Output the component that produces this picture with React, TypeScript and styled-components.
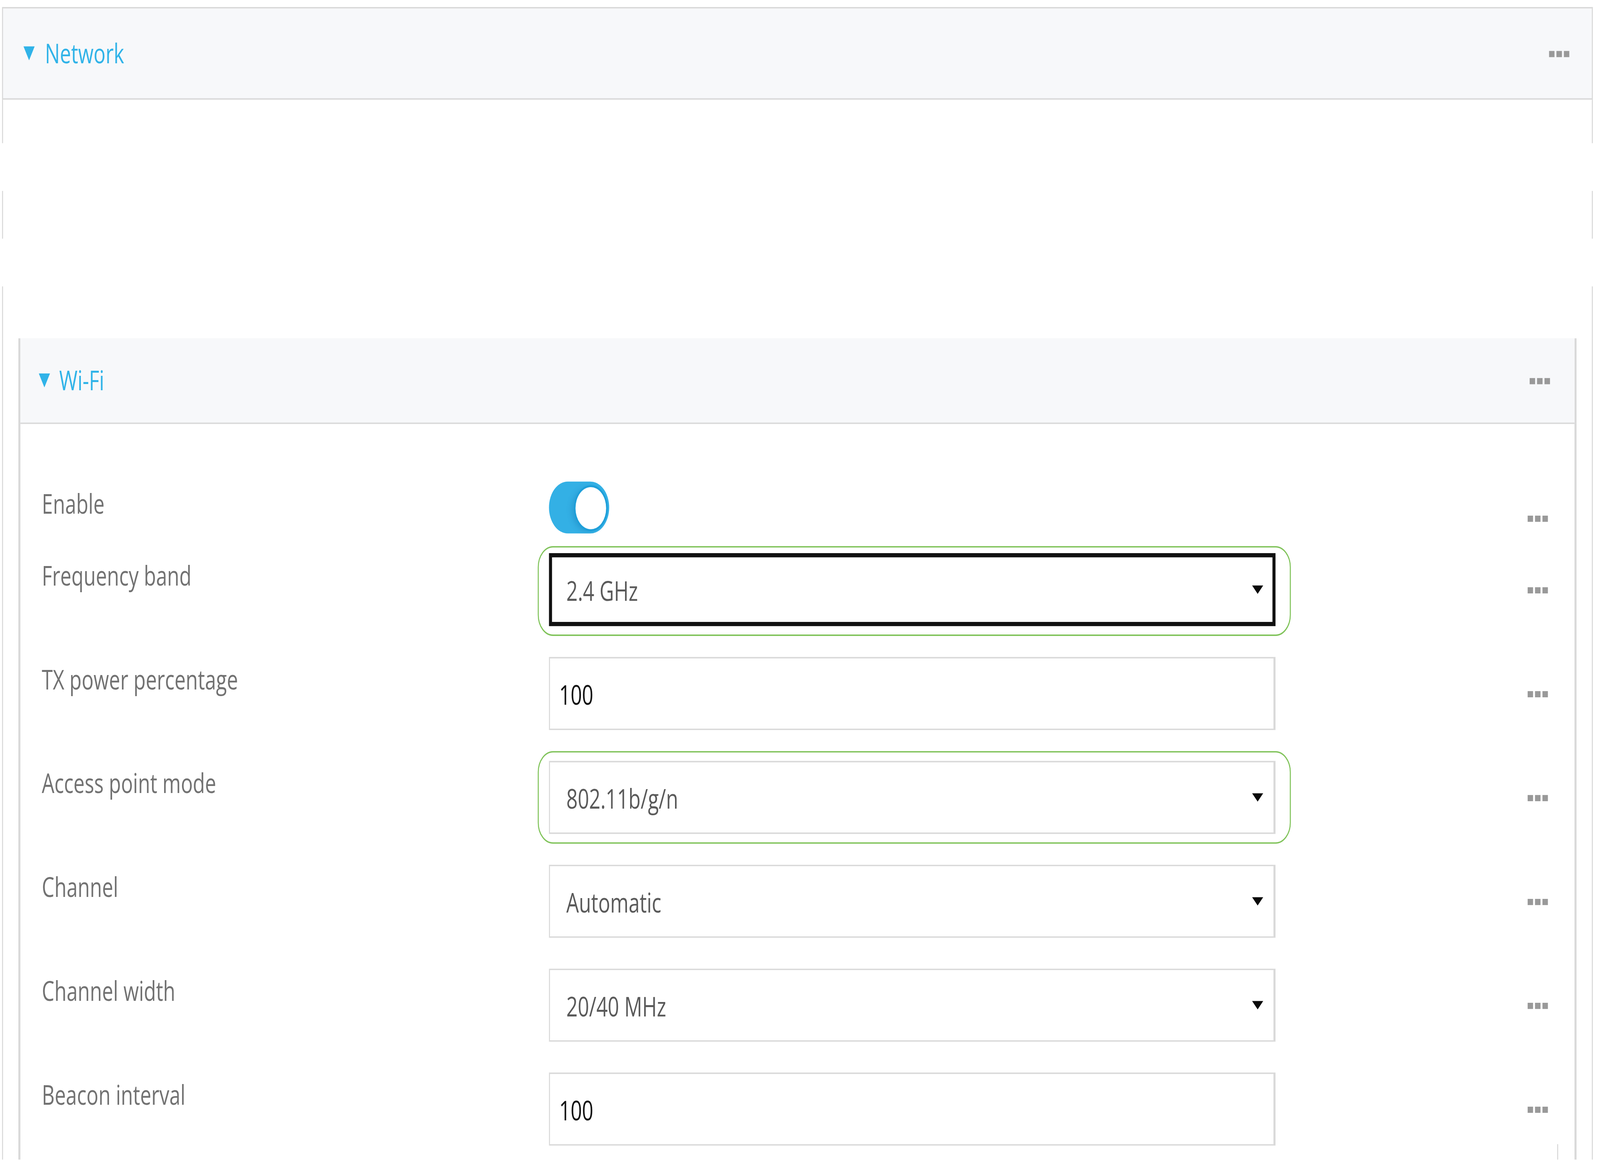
import React, { useState } from "react";
import styled, { createGlobalStyle } from "styled-components";

const GlobalStyle = createGlobalStyle`
  html, body {
    margin: 0;
    padding: 0;
    background: #ffffff;
  }
  body {
    font-family: "Open Sans", "Noto Sans", sans-serif;
  }
`;

// design size of the screen; it gets scaled to fill the window
const BASE_W = 1568;
const BASE_H = 827;

// real-size box so the document is exactly as large as the window
const Stage = styled.div`
  position: relative;
  overflow: hidden;
  background: #ffffff;
`;

const Page = styled.div`
  width: ${BASE_W}px;
  height: ${BASE_H}px;
  box-sizing: border-box;
  padding-top: 5px;
  background: #ffffff;
  transform-origin: 0 0;
`;

const OuterPanel = styled.section`
  margin-left: 2px;
  width: 1559px;
`;

const PanelHeader = styled.header<{ $height: number; $padLeft: number; $padRight: number; $boxed?: boolean }>`
  display: flex;
  align-items: center;
  height: ${(p) => p.$height}px;
  padding: 0 ${(p) => p.$padRight}px 0 ${(p) => p.$padLeft}px;
  background: #f7f8fa;
  border-bottom: 1px solid #d9d9d9;
  ${(p) =>
    p.$boxed &&
    `
    border-top: 1px solid #d9d9d9;
    border-left: 1px solid #d9d9d9;
    border-right: 1px solid #d9d9d9;
  `}
`;

const Caret = styled.svg<{ $gap: number }>`
  flex: none;
  width: 11px;
  height: 10px;
  margin-right: ${(p) => p.$gap}px;
  fill: #30b3e8;
`;

const Title = styled.span`
  flex: 1;
  font-size: 19.5px;
  line-height: 28px;
  color: #30b3e8;
`;

const DotsIcon = styled.svg`
  flex: none;
  width: 20px;
  height: 5px;
  fill: #999999;
`;

const Strip = styled.div<{ $h: number; $edged: boolean }>`
  height: ${(p) => p.$h}px;
  border-left: 1px solid ${(p) => (p.$edged ? "#d9d9d9" : "transparent")};
  border-right: 1px solid ${(p) => (p.$edged ? "#d9d9d9" : "transparent")};
`;

const WifiWrap = styled.div`
  border-left: 1px solid #d9d9d9;
  border-right: 1px solid #d9d9d9;
  padding: 0 15px;
`;

const WifiPanel = styled.section`
  border-left: 2px solid #d9d9d9;
  border-right: 2px solid #d9d9d9;
`;

const FieldList = styled.div`
  display: flex;
  flex-direction: column;
  padding-top: 41px;
`;

const Row = styled.div<{ $gap: number }>`
  display: flex;
  align-items: flex-start;
  margin-top: ${(p) => p.$gap}px;
  padding: 0 26px 0 21px;
`;

const Label = styled.div`
  flex: none;
  width: 497px;
  padding-top: 2px;
  font-size: 19.5px;
  line-height: 28px;
  color: #727272;
`;

const Control = styled.div`
  position: relative;
  flex: none;
  width: 712px;
  height: 52px;
`;

const RowEnd = styled.div`
  flex: 1;
  height: 52px;
  display: flex;
  align-items: center;
  justify-content: flex-end;
`;

const Box = styled.div<{ $focus?: boolean; $select?: boolean }>`
  box-sizing: border-box;
  display: flex;
  align-items: center;
  width: 100%;
  height: 52px;
  background: #ffffff;
  border: ${(p) => (p.$focus ? "3px solid #111111" : "1px solid #d9d9d9")};
  border-right-width: ${(p) => (p.$focus ? 3 : 2)}px;
  padding: 0 ${(p) => (p.$focus ? 9 : 10)}px 0 ${(p) => (p.$select ? (p.$focus ? 14 : 16) : 9)}px;
  font-size: 19.5px;
  color: ${(p) => (p.$select ? "#5a5a5a" : "#111111")};
`;

const Value = styled.span`
  flex: 1;
  white-space: nowrap;
`;

const Arrow = styled.svg`
  flex: none;
  width: 11px;
  height: 6px;
  fill: #0a0a0a;
`;

const Highlight = styled.div<{ $top: number; $bottom: number }>`
  position: absolute;
  left: -11px;
  right: -15px;
  top: -${(p) => p.$top}px;
  bottom: -${(p) => p.$bottom}px;
  border: 1.5px solid #80c35a;
  border-radius: 15px;
  pointer-events: none;
`;

const Track = styled.div`
  position: relative;
  width: 59px;
  height: 37px;
  border-radius: 19px;
  background: #33b0e5;
`;

const Knob = styled.span`
  position: absolute;
  top: 3.5px;
  right: 3.5px;
  width: 30px;
  height: 30px;
  border-radius: 50%;
  background: #ffffff;
  box-shadow: 0 0 0 1.5px #1e9fd9, -3px 1px 5px rgba(0, 80, 140, 0.25);
`;

const Trailer = styled.div`
  height: 11px;
  margin: -1px 16px 0 0;
  border-right: 1px solid #d9d9d9;
`;

function Dots() {
  return (
    <DotsIcon viewBox="0 0 20 5">
      <rect x="0" y="0.3" width="5.4" height="4.4" />
      <rect x="7.3" y="0.3" width="5.4" height="4.4" />
      <rect x="14.6" y="0.3" width="5.4" height="4.4" />
    </DotsIcon>
  );
}

function SectionCaret({ gap }: { gap: number }) {
  return (
    <Caret $gap={gap} viewBox="0 0 11 10">
      <polygon points="0,0 11,0 5.5,10" />
    </Caret>
  );
}

type Field = {
  label: string;
  kind: "toggle" | "select" | "text";
  value?: string;
  focus?: boolean;
  mark?: [number, number];
};

const fields: Field[] = [
  { label: "Enable", kind: "toggle" },
  { label: "Frequency band", kind: "select", value: "2.4 GHz", focus: true, mark: [5, 7] },
  { label: "TX power percentage", kind: "text", value: "100" },
  { label: "Access point mode", kind: "select", value: "802.11b/g/n", mark: [7, 7] },
  { label: "Channel", kind: "select", value: "Automatic" },
  { label: "Channel width", kind: "select", value: "20/40 MHz" },
  { label: "Beacon interval", kind: "text", value: "100" },
];

function FieldControl({ field }: { field: Field }) {
  if (field.kind === "toggle") {
    return (
      <Track>
        <Knob />
      </Track>
    );
  }
  return (
    <>
      <Box $select={field.kind === "select"} $focus={field.focus}>
        <Value>{field.value}</Value>
        {field.kind === "select" && (
          <Arrow viewBox="0 0 11 6">
            <polygon points="0,0 11,0 5.5,6" />
          </Arrow>
        )}
      </Box>
      {field.mark && <Highlight $top={field.mark[0]} $bottom={field.mark[1]} />}
    </>
  );
}

const strips: [number, boolean][] = [
  [31, true],
  [34, false],
  [34, true],
  [34, false],
  [37, true],
];

export default function App() {
  // window size is read once, the page is stretched to cover it
  const [view] = useState(() => ({ w: window.innerWidth, h: window.innerHeight }));
  const sx = view.w / BASE_W;
  const sy = view.h / BASE_H;

  return (
    <>
      <GlobalStyle />
      <Stage style={{ width: view.w, height: view.h }}>
        <Page style={{ transform: `scale(${sx}, ${sy})` }}>
          <OuterPanel>
            <PanelHeader $height={64} $padLeft={20} $padRight={22} $boxed>
              <SectionCaret gap={10} />
              <Title>Network</Title>
              <Dots />
            </PanelHeader>
            {strips.map(([h, edged], i) => (
              <Strip key={i} $h={h} $edged={edged} />
            ))}
            <WifiWrap>
              <WifiPanel>
                <PanelHeader $height={60} $padLeft={18} $padRight={24}>
                  <SectionCaret gap={9} />
                  <Title>Wi-Fi</Title>
                  <Dots />
                </PanelHeader>
                <FieldList>
                  {fields.map((f, i) => (
                    <Row key={f.label} $gap={i === 0 ? 0 : i === 1 ? -1 : 22}>
                      <Label>{f.label}</Label>
                      <Control>
                        <FieldControl field={f} />
                      </Control>
                      <RowEnd>
                        <Dots />
                      </RowEnd>
                    </Row>
                  ))}
                  <Trailer />
                </FieldList>
              </WifiPanel>
            </WifiWrap>
          </OuterPanel>
        </Page>
      </Stage>
    </>
  );
}
